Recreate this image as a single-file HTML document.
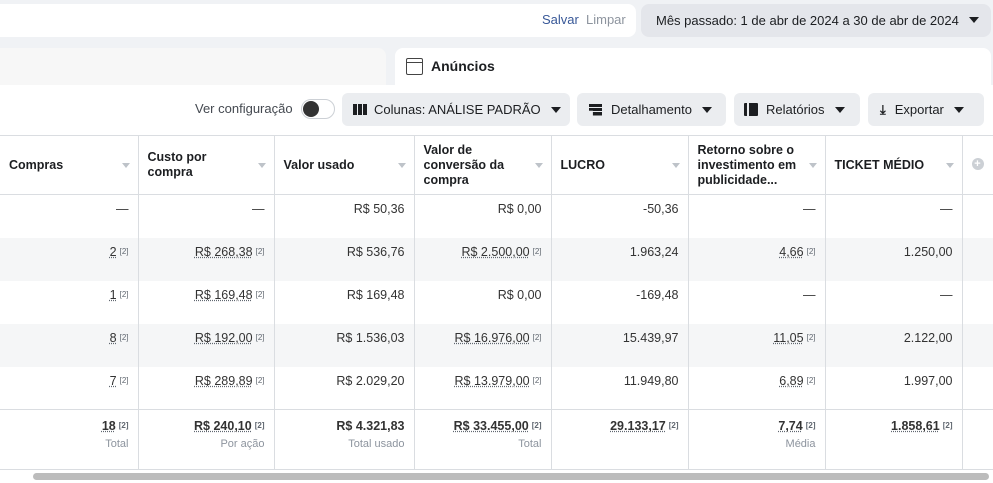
<!DOCTYPE html><html><head><meta charset="utf-8"><style>
*{box-sizing:border-box;margin:0;padding:0}
body{width:993px;height:483px;overflow:hidden;background:#f0f2f5;font-family:"Liberation Sans",Arial,sans-serif;color:#1c1e21;position:relative;font-size:13px}
.abs{position:absolute}
.btn{position:absolute;top:93px;height:33px;background:#ebedf0;border-radius:6px;display:flex;align-items:center;font-size:13px;color:#1c1e21}
.caret{display:inline-block;width:0;height:0;border-left:5px solid transparent;border-right:5px solid transparent;border-top:6px solid #1c1e21}
table{position:absolute;left:0;top:135px;border-collapse:collapse;background:#fff;table-layout:fixed;width:993px}
td,th{border-right:1px solid #dadde1;font-size:12.5px;text-align:right;padding:0 9px;vertical-align:top;color:#333}
th{text-align:left;font-weight:bold;height:59px;border-top:1px solid #dadde1;border-bottom:1px solid #dadde1;position:relative;line-height:15px;padding-right:24px;vertical-align:middle;color:#1c1e21}
th i{position:absolute;right:8px;top:27px;border-left:4px solid transparent;border-right:4px solid transparent;border-top:5px solid #bec3c9}
tr.r td{height:43px;padding-top:7px}
tr.g td{background:#f5f6f7}
u{text-decoration:underline dotted #606770}
sup{font-size:8px;color:#606770;margin-left:3px;vertical-align:2px}
.tot td{height:60px;padding-top:9px;font-weight:bold;border-top:1px solid #dadde1;border-bottom:1px solid #dadde1}
.tot small{display:block;font-weight:normal;color:#8d949e;font-size:11px;margin-top:5px}
</style></head><body>
<div class="abs" style="left:0;top:4px;width:636px;height:33px;background:#fff;border-radius:0 8px 8px 0"></div>
<div class="abs" style="left:542px;top:12px;color:#385898">Salvar</div>
<div class="abs" style="left:586px;top:12px;color:#8d949e">Limpar</div>
<div class="abs" style="left:641px;top:4px;width:350px;height:33px;background:#e4e6eb;border-radius:8px"></div>
<div class="abs" style="left:656px;top:13px;font-size:13px">Mês passado: 1 de abr de 2024 a 30 de abr de 2024</div>
<div class="abs caret" style="left:969px;top:17px"></div>
<div class="abs" style="left:0;top:48px;width:386px;height:37px;background:#f7f7f7;border-radius:0 8px 0 0"></div>
<div class="abs" style="left:395px;top:48px;width:596px;height:37px;background:#fff;border-radius:8px 8px 0 0"></div>
<div class="abs" style="left:406px;top:58px;width:17px;height:17px;border:1.5px solid #444;border-radius:2px"><div style="margin-top:3px;border-top:1px solid #444"></div></div>
<div class="abs" style="left:431px;top:58px;font-weight:bold;font-size:14px">Anúncios</div>
<div class="abs" style="left:0;top:85px;width:993px;height:50px;background:#fff"></div>
<div class="abs" style="left:195px;top:101px;color:#444950">Ver configuração</div>
<div class="abs" style="left:301px;top:99px;width:34px;height:20px;border:1px solid #ccd0d5;border-radius:10px;background:#fff"><div style="width:16px;height:16px;border-radius:50%;background:#333;margin:1px"></div></div>
<div class="btn" style="left:342px;width:228px"><span style="margin-left:11px;width:14px;height:11px;display:inline-block;border-left:4px solid #1c1e21;border-right:4px solid #1c1e21;background:linear-gradient(90deg,#ebedf0 0 1px,#1c1e21 1px 5px,#ebedf0 5px)"></span><span style="margin-left:7px">Colunas: ANÁLISE PADRÃO</span><span class="caret" style="margin-left:10px"></span></div>
<div class="btn" style="left:577px;width:149px"><span style="margin-left:12px;display:inline-block;width:13px;height:12px;background:linear-gradient(#1c1e21 0 3px,transparent 3px 4px,#1c1e21 4px 7px,transparent 7px 8px,#1c1e21 8px);clip-path:polygon(0 0,100% 0,100% 100%,30% 100%,30% 60%,0 60%)"></span><span style="margin-left:9px">Detalhamento</span><span class="caret" style="margin-left:10px"></span></div>
<div class="btn" style="left:734px;width:126px"><span style="margin-left:10px;display:inline-block;width:14px;height:13px;border-left:3px solid #1c1e21;background:#1c1e21;border-radius:1px;box-shadow:inset 2px 0 #ebedf0"></span><span style="margin-left:8px">Relatórios</span><span class="caret" style="margin-left:10px"></span></div>
<div class="btn" style="left:868px;width:116px"><span style="margin-left:12px;font-weight:bold">&#x2913;</span><span style="margin-left:9px">Exportar</span><span class="caret" style="margin-left:10px"></span></div>
<div class="abs" style="left:0;top:135px;width:993px;height:348px;background:#fff"></div>
<table>
<colgroup><col style="width:138px"><col style="width:136px"><col style="width:140px"><col style="width:137px"><col style="width:137px"><col style="width:137px"><col style="width:137px"><col style="width:31px"></colgroup>
<tr><th>Compras<i></i></th><th>Custo por<br>compra<i></i></th><th>Valor usado<i></i></th><th>Valor de<br>conversão da<br>compra<i></i></th><th>LUCRO<i></i></th><th>Retorno sobre o<br>investimento em<br>publicidade...<i></i></th><th>TICKET MÉDIO<i></i></th><th style="border-right:0"><span style="position:absolute;left:9px;top:22px;width:12px;height:12px;border-radius:50%;background:#ccd0d5;color:#fff;font-size:11px;line-height:12px;text-align:center">+</span></th></tr>
<tr class="r"><td>—</td><td>—</td><td>R$ 50,36</td><td>R$ 0,00</td><td>-50,36</td><td>—</td><td>—</td><td></td></tr>
<tr class="r g"><td><u>2</u><sup>[2]</sup></td><td><u>R$ 268,38</u><sup>[2]</sup></td><td>R$ 536,76</td><td><u>R$ 2.500,00</u><sup>[2]</sup></td><td>1.963,24</td><td><u>4,66</u><sup>[2]</sup></td><td>1.250,00</td><td></td></tr>
<tr class="r"><td><u>1</u><sup>[2]</sup></td><td><u>R$ 169,48</u><sup>[2]</sup></td><td>R$ 169,48</td><td>R$ 0,00</td><td>-169,48</td><td>—</td><td>—</td><td></td></tr>
<tr class="r g"><td><u>8</u><sup>[2]</sup></td><td><u>R$ 192,00</u><sup>[2]</sup></td><td>R$ 1.536,03</td><td><u>R$ 16.976,00</u><sup>[2]</sup></td><td>15.439,97</td><td><u>11,05</u><sup>[2]</sup></td><td>2.122,00</td><td></td></tr>
<tr class="r"><td><u>7</u><sup>[2]</sup></td><td><u>R$ 289,89</u><sup>[2]</sup></td><td>R$ 2.029,20</td><td><u>R$ 13.979,00</u><sup>[2]</sup></td><td>11.949,80</td><td><u>6,89</u><sup>[2]</sup></td><td>1.997,00</td><td></td></tr>
<tr class="tot"><td><u>18</u><sup>[2]</sup><small>Total</small></td><td><u>R$ 240,10</u><sup>[2]</sup><small>Por ação</small></td><td>R$ 4.321,83<small>Total usado</small></td><td><u>R$ 33.455,00</u><sup>[2]</sup><small>Total</small></td><td><u>29.133,17</u><sup>[2]</sup><small>&nbsp;</small></td><td><u>7,74</u><sup>[2]</sup><small>Média</small></td><td><u>1.858,61</u><sup>[2]</sup><small>&nbsp;</small></td><td></td></tr>
</table>
<div class="abs" style="left:33px;top:473px;width:956px;height:7px;background:#bcbcbc;border-radius:4px"></div>
</body></html>
